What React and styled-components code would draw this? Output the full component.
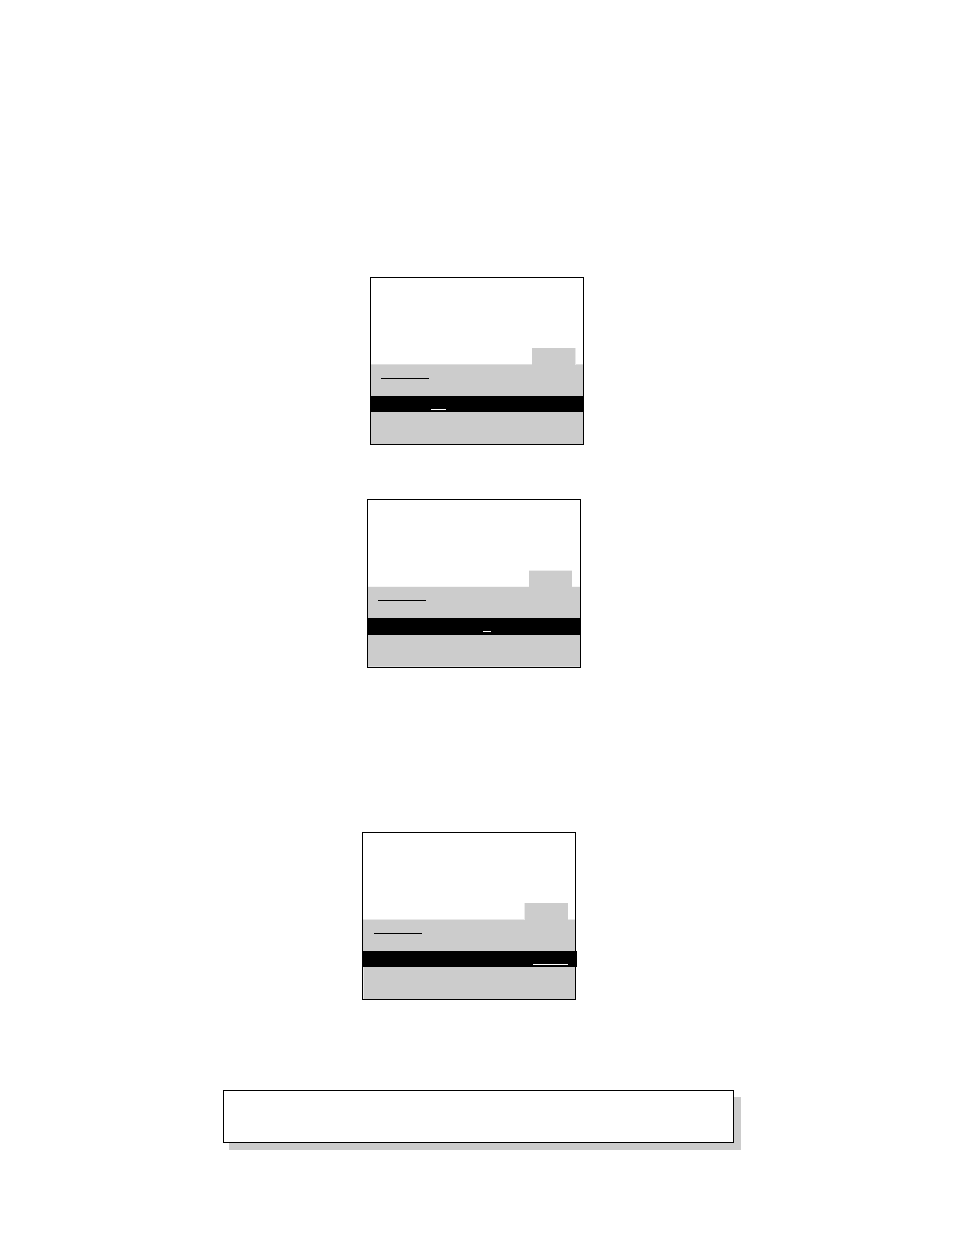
import React from "react";
import styled, { createGlobalStyle } from "styled-components";

const GREY = "#cccccc";

const GlobalStyle = createGlobalStyle`
  *, *::before, *::after { box-sizing: border-box; }
  body {
    margin: 0;
    background: #fff;
    font-family: "Liberation Sans", Arial, sans-serif;
  }
`;

const Page = styled.main`
  display: flex;
  flex-direction: column;
  padding: 277px 220px 92px 223px;

  @media (max-width: 820px) {
    padding-left: 24px;
    padding-right: 24px;
  }
`;

const Screen = styled.section`
  display: flex;
  flex-direction: column;
  width: 214px;
  margin-left: ${(p) => p.$indent}px;
  margin-bottom: ${(p) => p.$after}px;
  border: 1px solid #000;
`;

const Display = styled.div`
  display: flex;
  align-items: flex-end;
  justify-content: flex-end;
  height: 86px;
  padding-right: ${(p) => p.$inset}px;
`;

/* The tab overlaps the top edge of the menu so the two read as one shape. */
const Tab = styled.div`
  position: relative;
  box-sizing: content-box;
  width: 43px;
  height: 17px;
  margin-bottom: -1px;
  background: ${GREY};
  box-shadow: ${(p) => p.$edge};
`;

const Title = styled.div`
  height: 32px;
  padding: 13px ${(p) => p.$inset}px 0;
  border-top: 1px solid ${(p) => p.$edge};
  background: ${GREY};
`;

const Rule = styled.div`
  width: ${(p) => p.$width}px;
  height: 1px;
  background: ${(p) => p.$color};
`;

const Selection = styled.div`
  height: ${(p) => p.$height}px;
  margin-right: -${(p) => p.$overhang}px;
  padding: 13px 0 0 ${(p) => p.$cursor}px;
  background: #000;
`;

const Footer = styled.div`
  height: 32px;
  background: ${GREY};
  border-left: ${(p) => (p.$leftEdge ? "1px solid #e8e8e8" : "0")};
  border-bottom: ${(p) => (p.$bottomEdge ? "1px solid #dedede" : "0")};
`;

const Note = styled.aside`
  height: 53px;
  border: 1px solid #000;
  background: #fff;
  box-shadow: 7px 7px 0 ${GREY}, 6px 7px 0 ${GREY};
`;

const screens = [
  {
    id: "first", indent: 147, after: 54, tabInset: 8, tabEdge: "1px 0 0 #e8e8e8",
    edge: "#dedede", titleInset: 10, height: 16, overhang: 0, cursor: 60, cursorWidth: 15,
  },
  {
    id: "second", indent: 144, after: 164, tabInset: 8, tabEdge: "inset 0 1px 0 #ececec",
    edge: "#f6f6f6", titleInset: 10, height: 17, overhang: 0, cursor: 115, cursorWidth: 8,
    bottomEdge: true,
  },
  {
    id: "third", indent: 139, after: 90, tabInset: 7, tabEdge: "-1px 0 0 #ebebeb",
    edge: "#e8e8e8", titleInset: 11, height: 16, overhang: 2, cursor: 170, cursorWidth: 35,
    leftEdge: true,
  },
];

export default function App() {
  return (
    <>
      <GlobalStyle />
      <Page>
        {screens.map((s) => (
          <Screen key={s.id} $indent={s.indent} $after={s.after}>
            <Display $inset={s.tabInset}>
              <Tab $edge={s.tabEdge} />
            </Display>
            <Title $inset={s.titleInset} $edge={s.edge}>
              <Rule $width={48} $color="#000" />
            </Title>
            <Selection $height={s.height} $overhang={s.overhang} $cursor={s.cursor}>
              <Rule $width={s.cursorWidth} $color="#fff" />
            </Selection>
            <Footer $leftEdge={s.leftEdge} $bottomEdge={s.bottomEdge} />
          </Screen>
        ))}
        <Note />
      </Page>
    </>
  );
}
